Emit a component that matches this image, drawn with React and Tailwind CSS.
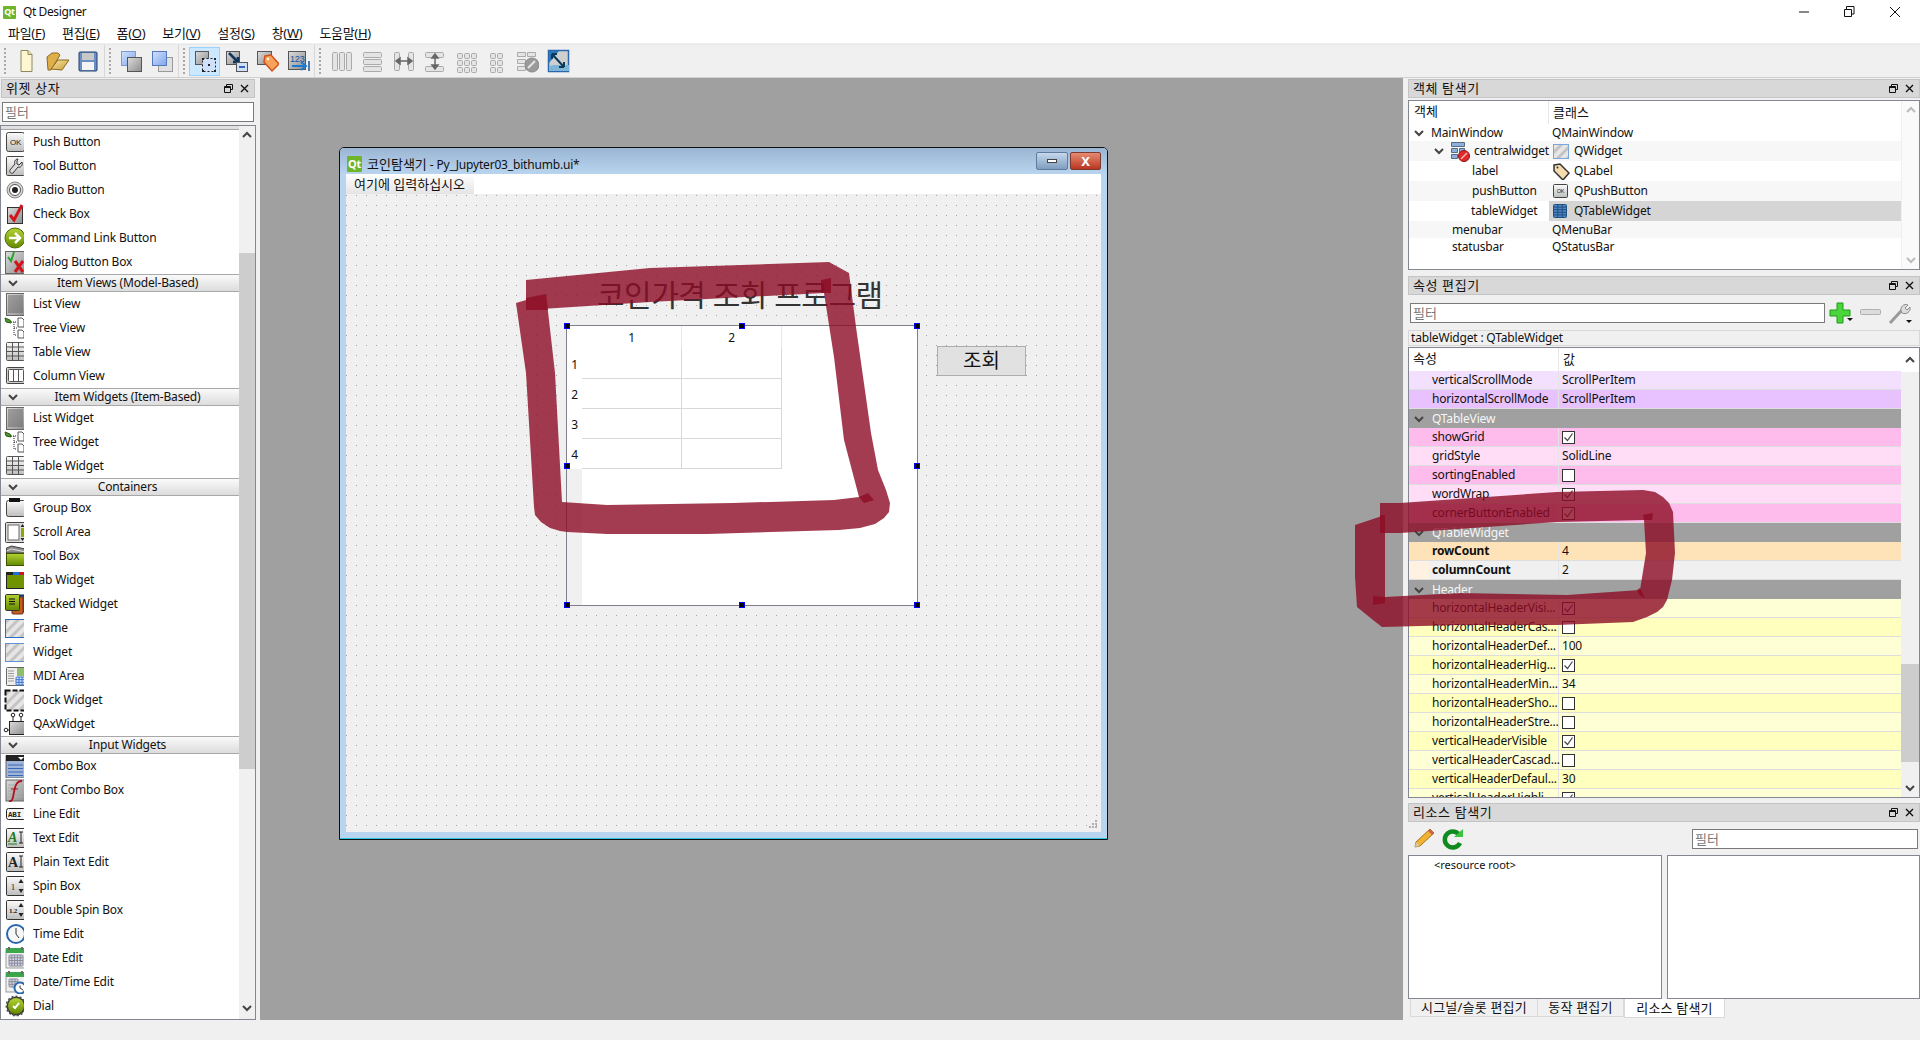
const Defs = () => (
  <svg className="absolute w-0 h-0">
    <defs>
      <linearGradient id="gBtn" x1="0" y1="0" x2="0" y2="1"><stop offset="0" stopColor="#fbfbfb" /><stop offset="1" stopColor="#bdbdbd" /></linearGradient>
      <linearGradient id="gDark" x1="0" y1="0" x2="1" y2="1"><stop offset="0" stopColor="#dcdcdc" /><stop offset="1" stopColor="#8e8e8e" /></linearGradient>
      <linearGradient id="gBlue" x1="0" y1="0" x2="1" y2="1"><stop offset="0" stopColor="#d3e2fb" /><stop offset="1" stopColor="#7fa4ec" /></linearGradient>
      <linearGradient id="gGreen" x1="0" y1="0" x2="0" y2="1"><stop offset="0" stopColor="#b4d334" /><stop offset="1" stopColor="#638a00" /></linearGradient>
      <linearGradient id="gFolder" x1="0" y1="0" x2="1" y2="1"><stop offset="0" stopColor="#fbe9a8" /><stop offset="1" stopColor="#c79a34" /></linearGradient>
      <pattern id="hatch" width="7" height="7" patternUnits="userSpaceOnUse" patternTransform="rotate(45)">
        <rect width="7" height="7" fill="#e6e6e6" /><rect width="3" height="7" fill="#c4c4c4" />
      </pattern>
    </defs>
  </svg>
);

const Grid = ({ x, y, w, h, cols, rows, stroke = "#555", fill = "url(#gBtn)" }) => (
  <>
    <rect x={x} y={y} width={w} height={h} fill={fill} stroke={stroke} rx="1" />
    {Array.from({ length: cols - 1 }, (_, i) => (
      <line key={i} x1={x + ((i + 1) * w) / cols} x2={x + ((i + 1) * w) / cols} y1={y} y2={y + h} stroke={stroke} />
    ))}
    {Array.from({ length: rows - 1 }, (_, i) => (
      <line key={i} y1={y + ((i + 1) * h) / rows} y2={y + ((i + 1) * h) / rows} x1={x} x2={x + w} stroke={stroke} />
    ))}
  </>
);

const Lines = ({ x, y, w, n, gap = 2, stroke = "#777" }) =>
  Array.from({ length: n }, (_, i) => <line key={i} x1={x} x2={x + w} y1={y + i * gap} y2={y + i * gap} stroke={stroke} />);

const treeShape = (
  <>
    <path d="M5 2l5 2 1 3-5-1z" fill="#4e9a2a" stroke="#2a5c12" />
    <path d="M11 6h6M14 6v13h3M14 12h3" stroke="#222" strokeDasharray="1 1" fill="none" />
    <path d="M18 2h4l2 2v7h-6zM18 14h4l2 2v6h-6z" fill="#fff" stroke="#555" />
  </>
);
const hatchBox = (stroke) => <rect x="5.5" y="3.5" width="20" height="18" fill="url(#hatch)" stroke={stroke} />;
const clock = (cx, cy, r) => (
  <>
    <circle cx={cx} cy={cy} r={r} fill="#fff" stroke="#2b67ad" strokeWidth="2" />
    <path d={`M${cx} ${cy - r + 3}V${cy}l3 2`} stroke="#333" fill="none" />
  </>
);
const calendar = (
  <>
    <rect x="6" y="3" width="19" height="19" fill="#f0f0f0" stroke="#999" />
    <rect x="6" y="2" width="19" height="5" fill="#3ca74a" />
    <path d="M9 1v3M22 1v3" stroke="#6a6a6a" strokeWidth="2" />
  </>
);

const icons = {
  ok: (
    <>
      <rect x="6.5" y="2.5" width="18" height="19" rx="2" fill="url(#gBtn)" stroke="#444" />
      <text x="15.5" y="15" fontSize="8" textAnchor="middle" fill="#222" fontFamily="Liberation Sans">OK</text>
    </>
  ),
  tool: (
    <>
      <rect x="6.5" y="2.5" width="18" height="19" rx="1" fill="url(#gBtn)" stroke="#444" />
      <path d="M18 5c-3 0-4 3-3 5l-5 6c-1 2 1 4 3 3l5-6c3 1 5-2 4-5l-3 3-2-1 0-3z" fill="#ddd" stroke="#333" />
    </>
  ),
  radio: (
    <>
      <circle cx="15" cy="12" r="8" fill="#d6d6d6" stroke="#888" />
      <circle cx="15" cy="12" r="5.5" fill="#fff" stroke="#555" />
      <circle cx="15" cy="12" r="3" fill="#222" />
    </>
  ),
  check: (
    <>
      <rect x="7.5" y="5.5" width="15" height="16" fill="url(#gDark)" stroke="#333" />
      <path d="M10 13l4 5 8-15" stroke="#d2141c" strokeWidth="3" fill="none" />
    </>
  ),
  cmd: (
    <>
      <circle cx="15" cy="12" r="10" fill="url(#gGreen)" stroke="#4d6b00" />
      <path d="M9 12h10M15 7l5 5-5 5" stroke="#fff" strokeWidth="2.5" fill="none" />
    </>
  ),
  dialog: (
    <>
      <rect x="5.5" y="1.5" width="21" height="22" fill="url(#gDark)" stroke="#666" />
      <path d="M8 7l3 4 3-9" stroke="#2ca32c" strokeWidth="2" fill="none" />
      <path d="M15 11l8 11M23 11l-8 11" stroke="#d2141c" strokeWidth="3" />
    </>
  ),
  list: (
    <>
      <rect x="6.5" y="1.5" width="19" height="22" fill="url(#gDark)" stroke="#666" />
      <Lines x={8} y={4} w={15} n={9} gap={2} stroke="#666" />
    </>
  ),
  tree: treeShape,
  table: <Grid x={6.5} y={2.5} w={18} h={18} cols={3} rows={4} />,
  column: (
    <>
      <rect x="6.5" y="3.5" width="19" height="16" rx="1" fill="#d0d0d0" stroke="#444" />
      <Grid x={8.5} y={5.5} w={15} h={12} cols={3} rows={1} fill="#fff" stroke="#555" />
    </>
  ),
  group: (
    <>
      <rect x="6.5" y="4.5" width="19" height="16" rx="2" fill="url(#gBtn)" stroke="#444" />
      <rect x="9" y="2" width="11" height="4" fill="#111" />
    </>
  ),
  scroll: (
    <>
      <rect x="5.5" y="2.5" width="20" height="20" rx="1" fill="#ddd" stroke="#444" />
      <rect x="8" y="5" width="11" height="15" fill="#fff" stroke="#666" />
      <rect x="21" y="8" width="3" height="9" fill="#8ba800" />
      <path d="M22.5 4l2 3h-4zM22.5 21l2-3h-4z" fill="#222" />
    </>
  ),
  toolbox: (
    <>
      <path d="M6.5 4l5-2 14 3v4h-19z" fill="#8d8d8d" stroke="#444" />
      <rect x="6.5" y="9.5" width="19" height="12" fill="url(#gGreen)" stroke="#3b5200" />
      <path d="M6.5 7l5-2 14 3" stroke="#ddd" fill="none" />
    </>
  ),
  tab: (
    <>
      <rect x="6.5" y="6.5" width="19" height="14" fill="#6f9400" stroke="#222" />
      <rect x="6" y="4" width="7" height="3" fill="#222" />
      <rect x="13" y="4" width="6" height="3" fill="#1c6fd6" />
      <rect x="19" y="4" width="6" height="3" fill="#d2141c" />
    </>
  ),
  stacked: (
    <>
      <rect x="18" y="3" width="9" height="17" rx="1" fill="#1d4fa8" stroke="#123" />
      <rect x="12" y="5" width="11" height="17" rx="1" fill="#c95a17" stroke="#632" />
      <rect x="5.5" y="2.5" width="14" height="16" rx="1" fill="url(#gGreen)" stroke="#333" />
      <Lines x={9} y={7} w={6} n={3} gap={2.5} stroke="#111" />
    </>
  ),
  frame: hatchBox("#2a6cc4"),
  widget: hatchBox("#5b93d6"),
  mdi: (
    <>
      <rect x="6.5" y="3.5" width="19" height="18" rx="1" fill="#eee" stroke="#666" />
      <rect x="17" y="4" width="8" height="8" fill="#8fbe6a" />
      <Grid x={16} y={13} w={9} h={8} cols={3} rows={3} fill="#cfe0fa" stroke="#3f74d0" />
      <Lines x={8} y={7} w={6} n={5} gap={2.5} stroke="#999" />
    </>
  ),
  dock: <rect x="5.5" y="2.5" width="21" height="20" fill="url(#hatch)" stroke="#111" strokeWidth="2" strokeDasharray="5 2" />,
  qax: (
    <>
      <rect x="9.5" y="9.5" width="15" height="13" fill="url(#gDark)" stroke="#222" />
      <path d="M13 9V4M21 9V4M9 18H7" stroke="#222" />
      <circle cx="13" cy="3" r="1.8" fill="#fff" stroke="#222" />
      <circle cx="21" cy="3" r="1.8" fill="#fff" stroke="#222" />
      <circle cx="6" cy="18" r="1.8" fill="#fff" stroke="#222" />
    </>
  ),
  combo: (
    <>
      <rect x="6" y="2" width="19" height="22" fill="#9fb5d8" stroke="#666" />
      <rect x="6" y="1" width="19" height="6" fill="#222" />
      <path d="M18 3h6l-3 3z" fill="#fff" />
      <Lines x={8} y={11} w={15} n={4} gap={3.5} stroke="#3a66b8" />
    </>
  ),
  font: (
    <>
      <rect x="6" y="2" width="19" height="21" fill="url(#gDark)" stroke="#666" />
      <Lines x={8} y={7} w={15} n={5} gap={3} stroke="#aaa" />
      <path d="M9 23c4 1 4-4 5-9s2-11 8-11" stroke="#b0121c" strokeWidth="1.8" fill="none" />
      <path d="M11 11h7" stroke="#b0121c" />
    </>
  ),
  line: (
    <>
      <rect x="6.5" y="6.5" width="19" height="11" rx="2" fill="#f4f4f4" stroke="#222" />
      <text x="8" y="15" fontSize="7.5" fontWeight="700" fill="#222" fontFamily="Liberation Mono">ABI</text>
    </>
  ),
  text: (
    <>
      <rect x="6.5" y="2.5" width="19" height="19" rx="1" fill="url(#gBtn)" stroke="#333" />
      <text x="8" y="16" fontSize="14" fontStyle="italic" fontWeight="700" fill="#1d7a1d" fontFamily="Liberation Serif">A</text>
      <path d="M8 18h9" stroke="#1d7a1d" />
      <path d="M19 6h4M21 6v11M19 17h4" stroke="#222" />
    </>
  ),
  plain: (
    <>
      <rect x="6.5" y="2.5" width="19" height="19" rx="1" fill="url(#gBtn)" stroke="#333" />
      <text x="8" y="17" fontSize="14" fontWeight="700" fill="#222" fontFamily="Liberation Serif">A</text>
      <path d="M19 6h4M21 6v11M19 17h4" stroke="#222" />
    </>
  ),
  spin: (
    <>
      <rect x="6.5" y="2.5" width="19" height="19" rx="1" fill="url(#gBtn)" stroke="#333" />
      <text x="13" y="16" fontSize="9" textAnchor="middle" fill="#222" fontFamily="Liberation Serif">1</text>
      <path d="M21 5l2.5 4h-5zM21 19l2.5-4h-5z" fill="#222" />
    </>
  ),
  dspin: (
    <>
      <rect x="6.5" y="2.5" width="19" height="19" rx="1" fill="url(#gBtn)" stroke="#333" />
      <text x="13" y="15" fontSize="7" textAnchor="middle" fontWeight="700" fill="#222" fontFamily="Liberation Serif">1.2</text>
      <path d="M21 5l2.5 4h-5zM21 19l2.5-4h-5z" fill="#222" />
    </>
  ),
  time: (
    <>
      <circle cx="16" cy="12" r="9" fill="#f7f7f7" stroke="#2b67ad" strokeWidth="2" />
      <path d="M16 6v6l3 4" stroke="#333" fill="none" />
    </>
  ),
  date: (
    <>
      {calendar}
      <Grid x={9} y={9} w={14} h={11} cols={5} rows={4} fill="#cfd6e6" stroke="#8a8a9a" />
    </>
  ),
  datetime: (
    <>
      {calendar}
      <Grid x={9} y={9} w={9} h={8} cols={3} rows={3} fill="#cfd6e6" stroke="#8a8a9a" />
      {clock(20, 18, 5.5)}
    </>
  ),
  dial: (
    <>
      <circle cx="16" cy="12" r="9.5" fill="#333" strokeDasharray="2 2" stroke="#555" strokeWidth="2" />
      <circle cx="16" cy="12" r="8" fill="url(#gGreen)" />
      <path d="M13 12l2 2 4-5" stroke="#fff" strokeWidth="2" fill="none" />
    </>
  ),
  // toolbar
  fileNew: (
    <>
      <path d="M7 1.5h7l4 4v17H7z" fill="#fdf6d0" stroke="#8a8a5a" />
      <path d="M14 1.5v4h4" fill="#efe2a0" stroke="#8a8a5a" />
    </>
  ),
  open: (
    <>
      <path d="M2 8l5-4h6l2 2-9 15H3z" fill="#dfb04a" stroke="#8a6a20" />
      <path d="M6 20l7-9h11l-7 10z" fill="url(#gFolder)" stroke="#8a6a20" />
    </>
  ),
  save: (
    <>
      <rect x="3" y="3" width="18" height="19" rx="1" fill="#6b8fc2" stroke="#24416e" />
      <rect x="6" y="4" width="12" height="7" fill="#c8c8c8" />
      <rect x="6" y="13" width="12" height="8" fill="#f4f4f4" />
    </>
  ),
  front: (
    <>
      <rect x="2.5" y="2.5" width="14" height="14" fill="url(#gBlue)" stroke="#7a9ad4" />
      <rect x="8.5" y="8.5" width="14" height="14" fill="url(#gDark)" stroke="#555" />
    </>
  ),
  back: (
    <>
      <rect x="8.5" y="8.5" width="14" height="14" fill="#e0e0e0" stroke="#999" />
      <rect x="2.5" y="2.5" width="14" height="14" fill="url(#gBlue)" stroke="#5577bb" />
    </>
  ),
  editW: (
    <>
      <rect x="2.5" y="2.5" width="13" height="13" fill="url(#gDark)" stroke="#555" />
      <rect x="9.5" y="9.5" width="13" height="13" fill="#cfe0fa" stroke="#222" strokeDasharray="2 2" />
      <path d="M9 9h2v2H9zM21 9h2v2h-2zM9 21h2v2H9zM21 21h2v2h-2zM15 15h2v2h-2z" fill="#222" />
    </>
  ),
  signal: (
    <>
      <rect x="2.5" y="2.5" width="13" height="13" fill="url(#gDark)" stroke="#555" />
      <path d="M5 4l8 8M9 13h5V8" stroke="#14355e" strokeWidth="2.5" fill="none" />
      <rect x="12.5" y="13.5" width="11" height="9" fill="#cfe0fa" stroke="#555" />
      <path d="M15 18h6" stroke="#3a66b8" strokeWidth="2" />
    </>
  ),
  tag: (
    <>
      <rect x="2.5" y="2.5" width="14" height="13" fill="url(#gDark)" stroke="#555" />
      <path d="M10 7l6-1 8 9-7 7-8-9z" fill="#f7a35a" stroke="#d2521c" strokeWidth="1.5" />
      <circle cx="13" cy="10" r="1.2" fill="#fff" />
    </>
  ),
  taborder: (
    <>
      <rect x="2.5" y="2.5" width="17" height="18" fill="url(#gDark)" stroke="#555" />
      <text x="4" y="13" fontSize="9" fill="#14559e" fontFamily="Liberation Sans">123</text>
      <path d="M6 17h13M15 13l5 4-5 4" stroke="#1c7ad0" strokeWidth="2" fill="none" />
      <path d="M23 12v10" stroke="#14559e" strokeWidth="1.5" />
    </>
  ),
  lh: (
    <>
      <rect x="3.5" y="3.5" width="5" height="18" rx="1" fill="#e4e4e4" stroke="#aaa" />
      <rect x="10.5" y="3.5" width="5" height="18" rx="1" fill="#e4e4e4" stroke="#aaa" />
      <rect x="17.5" y="3.5" width="5" height="18" rx="1" fill="#e4e4e4" stroke="#aaa" />
    </>
  ),
  lv: (
    <>
      <rect x="3.5" y="3.5" width="18" height="5" rx="1" fill="#e4e4e4" stroke="#aaa" />
      <rect x="3.5" y="10.5" width="18" height="5" rx="1" fill="#e4e4e4" stroke="#aaa" />
      <rect x="3.5" y="17.5" width="18" height="5" rx="1" fill="#e4e4e4" stroke="#aaa" />
    </>
  ),
  sh: (
    <>
      <rect x="3.5" y="3.5" width="5" height="18" rx="1" fill="#e4e4e4" stroke="#aaa" />
      <rect x="17.5" y="3.5" width="5" height="18" rx="1" fill="#e4e4e4" stroke="#aaa" />
      <path d="M6 12h14M9 9l-4 3 4 3zM17 9l4 3-4 3z" stroke="#666" strokeWidth="1.5" fill="#666" />
    </>
  ),
  sv: (
    <>
      <rect x="3.5" y="3.5" width="18" height="5" rx="1" fill="#e4e4e4" stroke="#aaa" />
      <rect x="3.5" y="17.5" width="18" height="5" rx="1" fill="#e4e4e4" stroke="#aaa" />
      <path d="M13 5v15M10 9l3-4 3 4zM10 16l3 4 3-4z" stroke="#666" strokeWidth="1.5" fill="#666" />
    </>
  ),
  g33: [4, 11, 18].flatMap((y) => [4, 11, 18].map((x) => <rect key={`${x}${y}`} x={x + 0.5} y={y + 0.5} width="5" height="5" rx="1" fill="#e4e4e4" stroke="#aaa" />)),
  g23: [4, 11, 18].flatMap((y) => [6, 13].map((x) => <rect key={`${x}${y}`} x={x + 0.5} y={y + 0.5} width="5" height="5" rx="1" fill="#e4e4e4" stroke="#aaa" />)),
  brk: (
    <>
      <path d="M2.5 3.5h8v4h-8zM12.5 3.5h8v4h-8zM2.5 10.5h8v4h-8zM2.5 17.5h8v4h-8z" fill="#e4e4e4" stroke="#aaa" />
      <circle cx="17" cy="16" r="7" fill="#9a9a9a" stroke="#888" />
      <path d="M13 19l7-7" stroke="#e4e4e4" strokeWidth="2" />
    </>
  ),
  adjust: (
    <>
      <rect x="2.5" y="1.5" width="20" height="21" fill="#cfcfcf" stroke="#2b67ad" strokeWidth="1.5" />
      <path d="M3 2h10L3 14z" fill="#2d79b8" />
      <path d="M3 17l5-1 15 0v6H3z" fill="#7fb6d8" />
      <path d="M6 5l12 13M6 5h5M6 5v5M18 18h-5M18 18v-5" stroke="#0c3a5c" strokeWidth="2" fill="none" />
    </>
  ),
  // object tree
  central: (
    <>
      <path d="M1.5 2.5h13v4h-13zM1.5 8.5h6v4h-6zM9.5 8.5h5v4h-5zM1.5 14.5h6v4h-6z" fill="#8fb0dc" stroke="#5a6a80" />
      <circle cx="14" cy="16" r="5.5" fill="#e02a2a" stroke="#9a1010" />
      <path d="M11 19l6-6" stroke="#f4b8b8" strokeWidth="1.5" />
    </>
  ),
  qwidget: <rect x="1.5" y="2.5" width="15" height="14" fill="url(#hatch)" stroke="#7ba6dc" />,
  qlabel: (
    <>
      <path d="M2 3l6-1 9 9-6 7-9-9z" fill="#f4dcae" stroke="#333" strokeWidth="1.5" />
      <circle cx="5.5" cy="5.5" r="1" fill="#333" />
    </>
  ),
  qpush: (
    <>
      <rect x="1.5" y="2.5" width="14" height="13" rx="1" fill="url(#gBtn)" stroke="#444" />
      <text x="8.5" y="11" fontSize="5.5" textAnchor="middle" fill="#222" fontFamily="Liberation Sans">OK</text>
    </>
  ),
  qtable: <Grid x={1.5} y={2.5} w={13} h={13} cols={3} rows={5} fill="#4d86c6" stroke="#21507e" />,
  plus: <path d="M8 1h6v7h7v6h-7v7H8v-7H1V8h7z" fill="#4ad53a" stroke="#1f9a1a" />,
};

const Icon = ({ name, size = 24, className = "" }) => (
  <svg width={size} height={size} viewBox={`0 0 ${size} ${size}`} className={`shrink-0 ${className}`}>
    {icons[name]}
  </svg>
);

const Chevron = ({ up, color = "#444" }) => (
  <svg width="12" height="8" viewBox="0 0 12 8" className="shrink-0">
    <path d={up ? "M2 6l4-4 4 4" : "M2 2l4 4 4-4"} stroke={color} strokeWidth="2" fill="none" />
  </svg>
);

const DockTitle = ({ title, className = "" }) => (
  <div className={`h-[19px] bg-[#d8d8d8] border border-[#c4c4c4] flex items-center pl-[4px] pr-[3px] shrink-0 ${className}`}>
    <span className="flex-1 text-[13px] tracking-[0.6px] -mt-[2px]">{title}</span>
    <svg width="9" height="9" viewBox="0 0 9 9" className="mr-[7px]">
      <path d="M2.5 2.5V.5h6v5H6.5M.5 2.5h6v6h-6zM.5 3.5h6" stroke="#111" fill="none" />
    </svg>
    <svg width="9" height="9" viewBox="0 0 9 9" className="mr-[2px]">
      <path d="M1 1l7 7M8 1L1 8" stroke="#111" strokeWidth="1.4" />
    </svg>
  </div>
);

const Filter = ({ className = "" }) => (
  <div className={`h-[20px] bg-white border border-[#7a7a7a] pl-[2px] leading-[18px] text-[13px] tracking-normal text-[#777] ${className}`}>필터</div>
);

const Qt = ({ className = "" }) => (
  <span className={`bg-[#6fb52c] text-white font-bold text-[11px] leading-[15px] text-center rounded-[1px] shrink-0 ${className}`}>Qt</span>
);

const toolGroups = [
  ["fileNew", "open", "save"],
  ["front", "back"],
  ["editW", "signal", "tag", "taborder"],
  ["lh", "lv", "sh", "sv", "g33", "g23", "brk", "adjust"],
];

const Toolbar = () => (
  <div className="h-[34px] flex items-stretch border-t border-[#e8e8e8] border-b border-b-[#d0d0d0] shrink-0">
    {toolGroups.map((group, i) => (
      <div key={i} className={`flex items-center pl-[4px] pr-[1px] ${i < 3 ? "border-r border-[#d8d8d8]" : ""}`}>
        <div className="w-[2px] h-[26px] border-l-2 border-dotted border-[#a8a8a8] mr-[4px]" />
        {group.map((name) => (
          <div
            key={name}
            className={`w-[31px] h-[29px] flex items-center justify-center border ${name === "editW" ? "bg-[#cce8ff] border-[#99d1ff]" : "border-transparent"}`}
          >
            <Icon name={name} />
          </div>
        ))}
      </div>
    ))}
  </div>
);

const boxSections = [
  { title: "Buttons", items: [["ok", "Push Button"], ["tool", "Tool Button"], ["radio", "Radio Button"], ["check", "Check Box"], ["cmd", "Command Link Button"], ["dialog", "Dialog Button Box"]] },
  { title: "Item Views (Model-Based)", items: [["list", "List View"], ["tree", "Tree View"], ["table", "Table View"], ["column", "Column View"]] },
  { title: "Item Widgets (Item-Based)", items: [["list", "List Widget"], ["tree", "Tree Widget"], ["table", "Table Widget"]] },
  { title: "Containers", items: [["group", "Group Box"], ["scroll", "Scroll Area"], ["toolbox", "Tool Box"], ["tab", "Tab Widget"], ["stacked", "Stacked Widget"], ["frame", "Frame"], ["widget", "Widget"], ["mdi", "MDI Area"], ["dock", "Dock Widget"], ["qax", "QAxWidget"]] },
  { title: "Input Widgets", items: [["combo", "Combo Box"], ["font", "Font Combo Box"], ["line", "Line Edit"], ["text", "Text Edit"], ["plain", "Plain Text Edit"], ["spin", "Spin Box"], ["dspin", "Double Spin Box"], ["time", "Time Edit"], ["date", "Date Edit"], ["datetime", "Date/Time Edit"], ["dial", "Dial"]] },
];

const WidgetBox = () => (
  <div className="w-[256px] shrink-0 flex flex-col pt-[1px]">
    <DockTitle title="위젯 상자" className="mx-px" />
    <Filter className="mx-[2px] mt-[4px] shrink-0" />
    <div className="mt-[3px] h-[895px] border border-[#828790] bg-white flex overflow-hidden">
      <div className="flex-1 overflow-hidden">
        <div className="-mt-[14px]">
          {boxSections.map((s) => (
            <div key={s.title}>
              <div className="h-[18px] flex items-center pl-[6px] border-y border-[#a8a8a8] bg-gradient-to-b from-[#fafafa] to-[#dcdcdc]">
                <Chevron />
                <span className="flex-1 text-center leading-none pr-[3px]">{s.title}</span>
              </div>
              {s.items.map(([icon, label]) => (
                <div key={label} className="h-[24px] flex items-center">
                  <Icon name={icon} className="-ml-[1px]" />
                  <span className="ml-[9px]">{label}</span>
                </div>
              ))}
            </div>
          ))}
        </div>
      </div>
      <div className="w-[16px] bg-[#f0f0f0] flex flex-col">
        <div className="h-[127px] flex flex-col items-center pt-[5px]">
          <Chevron up />
        </div>
        <div className="h-[516px] bg-[#cdcdcd]" />
        <div className="flex-1 flex flex-col justify-end items-center pb-[7px]">
          <Chevron />
        </div>
      </div>
    </div>
  </div>
);

const handles = [
  "left-[-3px] top-[-3px]",
  "left-[172px] top-[-3px]",
  "right-[-3px] top-[-3px]",
  "left-[-3px] top-[137px]",
  "right-[-3px] top-[137px]",
  "left-[-3px] bottom-[-3px]",
  "left-[172px] bottom-[-3px]",
  "right-[-3px] bottom-[-3px]",
];

const TableWidget = () => (
  <div className="absolute left-[220px] top-[131px] w-[352px] h-[281px] border border-[#80808c] bg-white flex">
    <div className="w-[15px] flex flex-col text-center">
      <div className="h-[23px]" />
      {[1, 2, 3, 4].map((n) => (
        <div key={n} className="h-[30px] leading-[32px]">{n}</div>
      ))}
      <div className="flex-1 bg-[#f0f0f0]" />
    </div>
    <div>
      <div className="h-[23px] flex">
        {[1, 2].map((n) => (
          <div key={n} className="w-[100px] text-center leading-[23px] border-r border-[#e6e6e6]">{n}</div>
        ))}
      </div>
      {[1, 2, 3, 4].map((r) => (
        <div key={r} className="h-[30px] flex">
          {[1, 2].map((c) => (
            <div key={c} className="w-[100px] border-r border-b border-[#d8d8d8]" />
          ))}
        </div>
      ))}
    </div>
    {handles.map((h) => (
      <div key={h} className={`absolute w-[6px] h-[6px] bg-black border border-[#0000ff] ${h}`} />
    ))}
  </div>
);

const FormWindow = () => (
  <div className="w-[769px] h-[693px] border border-[#111] rounded-t-[5px] bg-[#b9d4ee] flex flex-col overflow-hidden">
    <div className="h-[26px] shrink-0 flex items-center pl-[7px] pr-[6px] bg-gradient-to-b from-[#9ab6d3] to-[#b9d4ee]">
      <Qt className="w-[15px] h-[16px] mt-[6px]" />
      <span className="ml-[5px] flex-1 mt-[6px]"><span className="text-[13px] tracking-normal">코인탐색기</span> - Py_Jupyter03_bithumb.ui*</span>
      <div className="w-[32px] h-[18px] mr-[2px] rounded-[2px] border border-[#5f7c9c] bg-gradient-to-b from-[#c5d8ec] to-[#7f9dbf] flex items-center justify-center">
        <div className="w-[10px] h-[4px] bg-white border border-[#444]" />
      </div>
      <div className="w-[31px] h-[18px] rounded-[2px] border border-[#7c3a30] bg-gradient-to-b from-[#e58a72] to-[#b9341f] flex items-center justify-center text-white font-bold text-[13px] leading-none">X</div>
    </div>
    <div className="h-[658px] mx-[6px] flex flex-col min-h-0 shrink-0">
      <div className="h-[20px] bg-white shrink-0">
        <div className="w-[128px] h-full pl-[8px] bg-gradient-to-b from-[#ffffff] to-[#e4e4e4] leading-[20px] text-[13px] tracking-normal whitespace-nowrap">여기에 입력하십시오</div>
      </div>
      <div className="flex-1 relative bg-[#f0f0f0] bg-[radial-gradient(circle_at_0.5px_1.5px,#a0a0a0_0.6px,transparent_0.7px)] bg-[size:10px_10px]">
        <div className="absolute left-[251px] top-[83px] w-[286px] h-[36px] text-[30px] leading-[36px] tracking-[-0.5px] whitespace-nowrap text-[#333]">코인가격 조회 프로그램</div>
        <TableWidget />
        <div className="absolute left-[591px] top-[152px] w-[89px] h-[30px] bg-[#e1e1e1] border border-[#adadad] flex items-center justify-center text-[20px] tracking-normal">조회</div>
        <svg width="12" height="12" viewBox="0 0 12 12" className="absolute right-[2px] bottom-[2px]">
          <path d="M8 0h2v2H8zM5 3h2v2H5zM8 3h2v2H8zM2 6h2v2H2zM5 6h2v2H5zM8 6h2v2H8z" fill="#b0b0b0" transform="translate(0 2)" />
        </svg>
      </div>
    </div>
    <div className="flex-1 border-b border-[#2cc5e6]" />
  </div>
);

const ObjRow = ({ alt, indent, chevron, icon, name, iconR, cls, h = "h-[20px]", sel }) => (
  <div className={`flex ${h} items-center ${alt ? "bg-[#f7f7f7]" : ""}`}>
    <div className="w-[140px] flex items-center shrink-0 whitespace-nowrap" style={{ paddingLeft: indent }}>
      {chevron && <Chevron />}
      {icon && <Icon name={icon} size={22} className="ml-[5px] mr-[2px]" />}
      <span>{name}</span>
    </div>
    <div className={`flex-1 flex items-center self-stretch pl-[3px] ${sel ? "bg-[#d5d5d5]" : ""}`}>
      {iconR && <Icon name={iconR} size={18} />}
      <span className={iconR ? "ml-[4px]" : ""}>{cls}</span>
    </div>
  </div>
);

const ObjectInspector = () => (
  <div className="mt-[2px] h-[170px] shrink-0 border border-[#828790] bg-white flex">
    <div className="flex-1">
      <div className="h-[23px] flex items-center text-[13px] tracking-normal">
        <div className="w-[140px] pl-[5px] border-r border-[#e6e6e6] h-full leading-[21px]">객체</div>
        <div className="pl-[4px] -mt-[2px]">클래스</div>
      </div>
      <ObjRow h="h-[17px]" indent={4} chevron name={<span className="ml-[6px]">MainWindow</span>} cls="QMainWindow" />
      <ObjRow alt indent={24} chevron icon="central" name="centralwidget" iconR="qwidget" cls="QWidget" />
      <ObjRow indent={63} name="label" iconR="qlabel" cls="QLabel" />
      <ObjRow alt indent={63} name="pushButton" iconR="qpush" cls="QPushButton" />
      <ObjRow sel indent={62} name="tableWidget" iconR="qtable" cls="QTableWidget" />
      <ObjRow alt h="h-[17px]" indent={43} name="menubar" cls="QMenuBar" />
      <ObjRow h="h-[17px]" indent={43} name="statusbar" cls="QStatusBar" />
    </div>
    <div className="w-[18px] flex flex-col justify-between items-center py-[5px] border-l border-[#f0f0f0] bg-[#fafafa]">
      <Chevron up color="#bbb" />
      <Chevron color="#bbb" />
    </div>
  </div>
);

const LILAC1 = "bg-[#f3dffe]";
const LILAC2 = "bg-[#e8c2fe]";
const PINK1 = "bg-[#fdbcec]";
const PINK2 = "bg-[#ffddf6]";
const YEL1 = "bg-[#ffffd6]";
const YEL2 = "bg-[#ffffbe]";

const props = [
  { n: "verticalScrollMode", v: "ScrollPerItem", bg: LILAC1 },
  { n: "horizontalScrollMode", v: "ScrollPerItem", bg: LILAC2 },
  { section: "QTableView" },
  { n: "showGrid", c: true, bg: PINK1 },
  { n: "gridStyle", v: "SolidLine", bg: PINK2 },
  { n: "sortingEnabled", c: false, bg: PINK1 },
  { n: "wordWrap", c: true, bg: PINK2 },
  { n: "cornerButtonEnabled", c: true, bg: PINK1 },
  { section: "QTableWidget" },
  { n: "rowCount", v: "4", bg: "bg-[#ffe3b8]", bold: true },
  { n: "columnCount", v: "2", bg: "bg-[#f0f0f0]", bold: true, gutter: true },
  { section: "Header" },
  { n: "horizontalHeaderVisi...", c: true, bg: YEL1 },
  { n: "horizontalHeaderCas...", c: false, bg: YEL2 },
  { n: "horizontalHeaderDef...", v: "100", bg: YEL1 },
  { n: "horizontalHeaderHig...", c: true, bg: YEL2 },
  { n: "horizontalHeaderMin...", v: "34", bg: YEL1 },
  { n: "horizontalHeaderSho...", c: false, bg: YEL2 },
  { n: "horizontalHeaderStre...", c: false, bg: YEL1 },
  { n: "verticalHeaderVisible", c: true, bg: YEL2 },
  { n: "verticalHeaderCascad...", c: false, bg: YEL1 },
  { n: "verticalHeaderDefaul...", v: "30", bg: YEL2 },
  { n: "verticalHeaderHighli...", c: true, bg: YEL1 },
];

const Check = ({ on }) => (
  <div className="w-[13px] h-[13px] bg-white border border-[#333] flex items-center justify-center">
    {on && (
      <svg width="11" height="11" viewBox="0 0 11 11">
        <path d="M1.5 5.5l3 3 5-7" stroke="#444" strokeWidth="1.2" fill="none" />
      </svg>
    )}
  </div>
);

const PropRow = ({ p }) => {
  if (p.section)
    return (
      <div className="h-[19px] bg-[#a0a0a0] text-[#f6f6f6] flex items-center pl-[4px]">
        <Chevron />
        <span className="ml-[7px]">{p.section}</span>
      </div>
    );
  return (
    <div className={`h-[19px] flex border-b border-[#dedede] ${p.bg}`}>
      <div className={`w-[150px] border-r border-[#e4e4e4] flex leading-[18px] whitespace-nowrap ${p.bold ? "font-bold" : ""}`}>
        <div className={`w-[20px] shrink-0 ${p.gutter ? "bg-[#fff2e2]" : ""}`} />
        <span className="ml-[3px]">{p.n}</span>
      </div>
      <div className="pl-[3px] flex items-center leading-[18px]">
        {p.v ? p.v : <Check on={p.c} />}
      </div>
    </div>
  );
};

const PropertyEditor = () => (
  <div className="mt-[1px] h-[451px] shrink-0 border border-[#828790] bg-white flex overflow-hidden">
    <div className="flex-1 min-w-0">
      <div className="h-[23px] flex items-center text-[13px] tracking-normal">
        <div className="w-[150px] pl-[4px] border-r border-[#e6e6e6] h-full leading-[21px]">속성</div>
        <div className="pl-[4px] -mt-[2px]">값</div>
      </div>
      {props.map((p) => (
        <PropRow key={p.n || p.section} p={p} />
      ))}
    </div>
    <div className="w-[18px] flex flex-col items-center bg-[#f0f0f0]">
      <div className="h-[316px] w-full flex justify-center pt-[8px] bg-[linear-gradient(#fff_24px,#f0f0f0_24px)]">
        <Chevron up />
      </div>
      <div className="h-[98px] w-full bg-[#cdcdcd]" />
      <div className="flex-1 flex items-end pb-[5px]">
        <Chevron />
      </div>
    </div>
  </div>
);

const RightDock = () => (
  <div className="w-[512px] shrink-0 flex flex-col pt-[1px]">
    <DockTitle title="객체 탐색기" />
    <ObjectInspector />
    <DockTitle title="속성 편집기" className="mt-[6px]" />
    <div className="mt-[7px] h-[22px] flex items-center shrink-0">
      <Filter className="w-[415px] ml-[2px]" />
      <Icon name="plus" size={22} className="ml-[4px]" />
      <svg width="6" height="4" className="-ml-[4px] mt-[14px]"><path d="M0 0h6L3 3z" fill="#111" /></svg>
      <svg width="24" height="10" viewBox="0 0 24 10" className="ml-[6px]">
        <rect x="1.5" y="1.5" width="20" height="5" rx="1" fill="#dcdcdc" stroke="#b0b0b0" />
      </svg>
      <svg width="30" height="24" viewBox="0 0 30 24" className="ml-[2px]">
        <path d="M5 22L17 9" stroke="#9a9a9a" strokeWidth="3" />
        <path d="M16 10c-1-4 3-8 7-6l-3 3 2 2 3-3c1 5-4 8-8 6z" fill="#dcdcdc" stroke="#8a8a8a" />
        <path d="M25 19h6l-3 3z" fill="#111" transform="translate(-4 0)" />
      </svg>
    </div>
    <div className="mt-[6px] h-[16px] bg-[#f0f0f0] border border-[#d8d8d8] pl-[2px] leading-[14px] shrink-0">tableWidget : QTableWidget</div>
    <PropertyEditor />
    <DockTitle title="리소스 탐색기" className="mt-[5px]" />
    <div className="h-[33px] flex items-center shrink-0">
      <svg width="24" height="24" viewBox="0 0 24 24" className="ml-[4px]">
        <path d="M3 20l1-5L18 2l4 4L8 19z" fill="#f2b233" stroke="#a87414" />
        <path d="M3 20l1-5 4 4z" fill="#d8c8a0" />
        <path d="M18 2l4 4-2 2-4-4z" fill="#d06050" />
      </svg>
      <svg width="22" height="22" viewBox="0 0 22 22" className="ml-[6px]">
        <path d="M18 8a8 8 0 1 0 0 7" stroke="#0f8a1f" strokeWidth="4.5" fill="none" />
        <path d="M12 9h9V1z" fill="#3bc43f" />
      </svg>
      <Filter className="w-[226px] ml-auto mr-[2px]" />
    </div>
    <div className="h-[144px] flex justify-between shrink-0">
      <div className="w-[254px] border border-[#828790] bg-white pl-[25px] text-[11px] tracking-normal leading-[18px]">&lt;resource root&gt;</div>
      <div className="w-[253px] border border-[#828790] bg-white" />
    </div>
    <div className="flex h-[19px] pl-[2px] shrink-0 text-[13px] tracking-[0.2px]">
      <div className="w-[128px] h-[18px] border border-t-0 border-[#d9d9d9] text-center leading-[16px]">시그널/슬롯 편집기</div>
      <div className="w-[86px] h-[18px] border border-t-0 border-l-0 border-[#d9d9d9] text-center leading-[16px]">동작 편집기</div>
      <div className="w-[101px] bg-white border border-t-0 border-[#d9d9d9] text-center leading-[18px]">리소스 탐색기</div>
    </div>
  </div>
);

// hand-drawn red marker strokes on top of the shot
const RED = "#8c0b24";
const marks = [
  "526,280 650,268 829,262 849,273 856,327 871,433 878,470 886,490 890,503 889,512 884,518 875,524 860,528 839,530 708,534 607,534 567,532 560,531 550,528 541,522 535,515 534,507 526,373 516,303 546,294 555,373 562,502 607,505 733,503 834,500 859,497 844,440 834,357 824,293 650,302 526,310",
  "526,298 546,294 548,310 526,310",
  "821,280 831,278 831,293 821,293",
  "859,497 868,493 874,500 864,503",
  "1380,503 1400,503 1557,492 1643,490 1655,492 1663,497 1669,503 1673,512 1675,553 1672,580 1667,600 1663,607 1657,612 1647,617 1633,622 1557,625 1460,625 1382,627 1373,620 1357,607 1355,577 1355,525 1385,515 1385,597 1460,593 1567,595 1640,590 1646,553 1644,520 1557,522 1400,533 1380,533",
  "1380,515 1385,515 1385,533 1380,533",
  "1373,596 1385,597 1385,603 1373,605",
  "1643,515 1653,513 1652,520 1644,520",
  "1637,590 1640,588 1645,598 1640,596",
];

export default function App() {
  return (
    <div className="relative w-[1920px] h-[1040px] overflow-hidden bg-[#f0f0f0] flex flex-col text-[12px] leading-[16px] tracking-[-0.18px] text-[#111] font-['Noto_Sans','Noto_Sans_CJK_KR',sans-serif]">
      <Defs />
      <div className="h-[24px] bg-white flex items-center pl-[3px] shrink-0 relative">
        <Qt className="w-[13px] h-[13px] !text-[9px] !leading-[12px]" />
        <span className="ml-[7px] tracking-[-0.4px]">Qt Designer</span>
        <svg width="101" height="12" viewBox="0 0 101 12" className="ml-auto mr-[20px]">
          <path d="M0 6h10" stroke="#111" />
          <path d="M45.5 3.5h7v7h-7zM47.5 3V.5h7.5v7.5h-2.5" stroke="#111" fill="none" />
          <path d="M91 1l10 10M101 1L91 11" stroke="#111" />
        </svg>
      </div>
      <div className="h-[20px] bg-white flex items-center pl-[8px] gap-[17px] shrink-0 text-[13px] tracking-[-0.3px] -mt-[1px] mb-[1px]">
        {[["파일", "F"], ["편집", "E"], ["폼", "O"], ["보기", "V"], ["설정", "S"], ["창", "W"], ["도움말", "H"]].map(([t, k]) => (
          <span key={k}>{t}(<u>{k}</u>)</span>
        ))}
      </div>
      <Toolbar />
      <div className="flex h-[942px] shrink-0">
        <WidgetBox />
        <div className="flex-1 ml-[4px] mr-[5px] bg-[#a0a0a0] pl-[79px] pt-[69px]">
          <FormWindow />
        </div>
        <RightDock />
      </div>
      <svg width="1920" height="1040" className="absolute top-0 left-0 pointer-events-none">
        {marks.map((m, i) => (
          <polygon key={i} points={m} fill={RED} fillOpacity="0.8" />
        ))}
      </svg>
    </div>
  );
}
